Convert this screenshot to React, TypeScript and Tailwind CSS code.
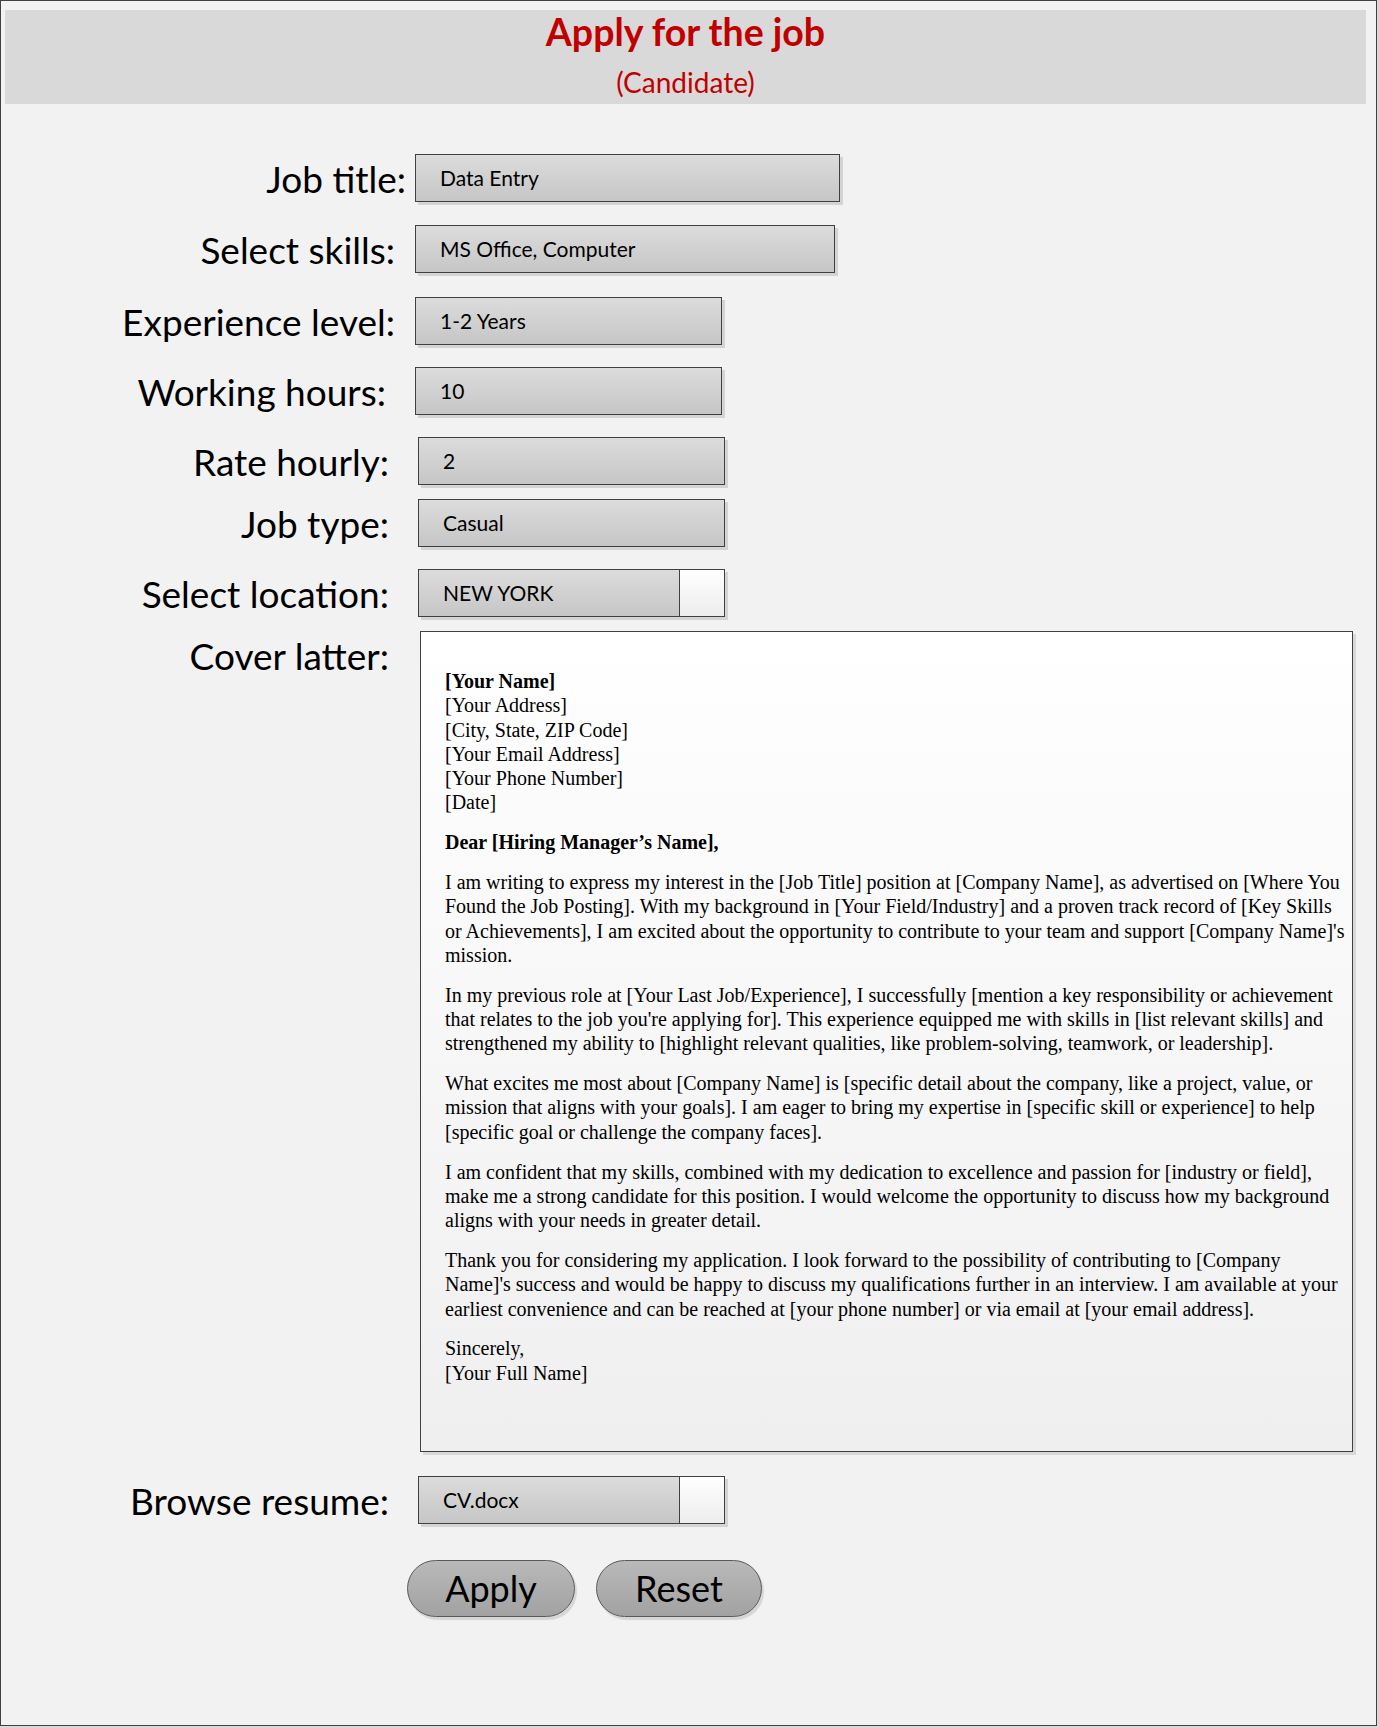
const CAL = "font-['Lato','Open_Sans',sans-serif]";

type Field = {
  label: string;
  value: string;
  mt: number;
  labelRight: number;
  left: number;
  width: number;
  picker?: boolean;
};

const fields: Field[] = [
  { label: "Job title:", value: "Data Entry", mt: 50, labelRight: 406, left: 415, width: 425 },
  { label: "Select skills:", value: "MS Office, Computer", mt: 23, labelRight: 395, left: 415, width: 420 },
  { label: "Experience level:", value: "1-2 Years", mt: 24, labelRight: 395, left: 415, width: 307 },
  { label: "Working hours:", value: "10", mt: 22, labelRight: 386, left: 415, width: 307 },
  { label: "Rate hourly:", value: "2", mt: 22, labelRight: 389, left: 418, width: 307 },
  { label: "Job type:", value: "Casual", mt: 14, labelRight: 389, left: 418, width: 307 },
  { label: "Select location:", value: "NEW YORK", mt: 22, labelRight: 389, left: 418, width: 307, picker: true },
];

const LABEL = `${CAL} shrink-0 whitespace-nowrap text-right text-[37px] leading-none text-black`;

function FieldRow({ f }: { f: Field }) {
  return (
    <div className="flex h-[48px] items-center" style={{ marginTop: f.mt }}>
      <div className={LABEL} style={{ width: f.labelRight - 1 }}>
        {f.label}
      </div>
      <InputBox value={f.value} picker={f.picker} ml={f.left - f.labelRight} width={f.width} />
    </div>
  );
}

function InputBox({ value, picker, ml, width }: { value: string; picker?: boolean; ml: number; width: number }) {
  return (
    <div
      className="flex h-[48px] shrink-0 border border-[#404040] bg-gradient-to-b from-[#dcdcdc] to-[#c6c6c6] shadow-[3px_3px_0_#d4d4d4]"
      style={{ marginLeft: ml, width }}
    >
      <div className={`${CAL} flex flex-1 items-center pl-[24px] text-[21px] text-black`}>{value}</div>
      {picker ? (
        <div className="w-[45px] border-l border-[#404040] bg-gradient-to-b from-white to-[#ededed]" />
      ) : null}
    </div>
  );
}

function P({ children, last }: { children: React.ReactNode; last?: boolean }) {
  return <p className={last ? "" : "mb-[15.5px]"}>{children}</p>;
}

function CoverLetter() {
  return (
    <div className="ml-[31px] h-[821px] w-[933px] shrink-0 border border-[#404040] bg-gradient-to-b from-white to-[#efefef] shadow-[3px_3px_0_#d9d9d9]">
      <div className="whitespace-nowrap pl-[24px] pt-[37px] font-['Liberation_Serif','Times_New_Roman',serif] text-[20px] leading-[24.3px] text-black">
        <P>
          <b>[Your Name]</b>
          <br />
          [Your Address]
          <br />
          [City, State, ZIP Code]
          <br />
          [Your Email Address]
          <br />
          [Your Phone Number]
          <br />
          [Date]
        </P>
        <P>
          <b>Dear [Hiring Manager’s Name],</b>
        </P>
        <P>
          I am writing to express my interest in the [Job Title] position at [Company Name], as advertised on [Where You
          <br />
          Found the Job Posting]. With my background in [Your Field/Industry] and a proven track record of [Key Skills
          <br />
          or Achievements], I am excited about the opportunity to contribute to your team and support [Company Name]'s
          <br />
          mission.
        </P>
        <P>
          In my previous role at [Your Last Job/Experience], I successfully [mention a key responsibility or achievement
          <br />
          that relates to the job you're applying for]. This experience equipped me with skills in [list relevant skills] and
          <br />
          strengthened my ability to [highlight relevant qualities, like problem-solving, teamwork, or leadership].
        </P>
        <P>
          What excites me most about [Company Name] is [specific detail about the company, like a project, value, or
          <br />
          mission that aligns with your goals]. I am eager to bring my expertise in [specific skill or experience] to help
          <br />
          [specific goal or challenge the company faces].
        </P>
        <P>
          I am confident that my skills, combined with my dedication to excellence and passion for [industry or field],
          <br />
          make me a strong candidate for this position. I would welcome the opportunity to discuss how my background
          <br />
          aligns with your needs in greater detail.
        </P>
        <P>
          Thank you for considering my application. I look forward to the possibility of contributing to [Company
          <br />
          Name]'s success and would be happy to discuss my qualifications further in an interview. I am available at your
          <br />
          earliest convenience and can be reached at [your phone number] or via email at [your email address].
        </P>
        <P last>
          Sincerely,
          <br />
          [Your Full Name]
        </P>
      </div>
    </div>
  );
}

function PillButton({ label, className }: { label: string; className: string }) {
  return (
    <button
      type="button"
      className={`${CAL} flex h-[57px] items-center justify-center rounded-full border border-[#595959] bg-gradient-to-b from-[#b9b9b9] to-[#a2a2a2] pb-[2px] text-[36px] leading-none text-black shadow-[2px_3px_1px_#d6d6d6] ${className}`}
    >
      {label}
    </button>
  );
}

export default function App() {
  return (
    <div className="h-[1728px] w-[1379px] bg-[#d9d9d9]">
      <div className="h-[1726px] w-[1377px] border border-[#404040] bg-[#f2f2f2]">
        <header className="ml-[4px] mt-[9px] flex h-[94px] w-[1361px] flex-col items-center bg-[#d9d9d9] text-[#c00000]">
          <h1 className={`${CAL} mt-[-1px] text-[37.5px] font-bold leading-[46px]`}>Apply for the job</h1>
          <div className={`${CAL} mt-[10px] text-[28px] leading-[34px]`}>(Candidate)</div>
        </header>

        {fields.map((f) => (
          <FieldRow key={f.label} f={f} />
        ))}

        <div className="mt-[14px] flex items-start">
          <div className={`${LABEL} w-[388px] pt-[6px]`}>Cover latter:</div>
          <CoverLetter />
        </div>

        <div className="mt-[24px] flex h-[48px] items-center">
          <div className={`${LABEL} w-[388px]`}>Browse resume:</div>
          <InputBox value="CV.docx" picker ml={29} width={307} />
        </div>

        <div className="mt-[36px] flex">
          <PillButton label="Apply" className="ml-[406px] w-[168px]" />
          <PillButton label="Reset" className="ml-[21px] w-[166px]" />
        </div>
      </div>
    </div>
  );
}
